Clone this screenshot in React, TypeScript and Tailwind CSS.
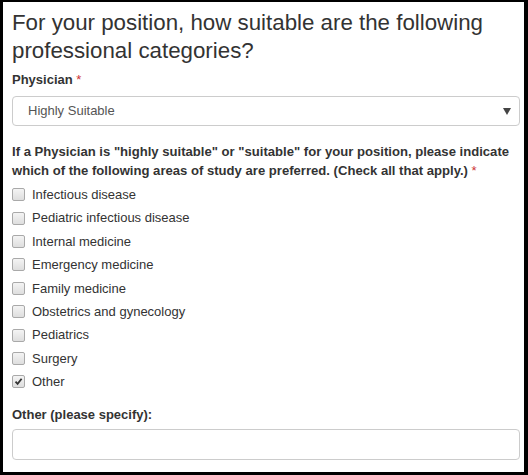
import { useState } from "react";

const areas = [
  "Infectious disease",
  "Pediatric infectious disease",
  "Internal medicine",
  "Emergency medicine",
  "Family medicine",
  "Obstetrics and gynecology",
  "Pediatrics",
  "Surgery",
  "Other",
];

function Box({ checked, onToggle }: { checked: boolean; onToggle: () => void }) {
  return (
    <span
      onClick={onToggle}
      className="flex h-[13px] w-[13px] shrink-0 items-center justify-center rounded-[2px] border border-[#a9a9a9] bg-gradient-to-b from-[#f4f4f4] to-[#dedede]"
    >
      {checked && (
        <svg width="9" height="9" viewBox="0 0 9 9">
          <path d="M1.5 4.6 L3.6 6.8 L7.6 1.8" fill="none" stroke="#333" strokeWidth="1.8" />
        </svg>
      )}
    </span>
  );
}

export default function App() {
  const [picked, setPicked] = useState<string[]>(["Other"]);

  const toggle = (name: string) =>
    setPicked((p) => (p.includes(name) ? p.filter((x) => x !== name) : [...p, name]));

  return (
    <div className="h-[475px] w-[528px] bg-black pt-[2px] pr-[4px] pb-[3px] pl-[3px] font-['Liberation_Sans',Arial,sans-serif]">
      <div className="h-full bg-white pt-[7px] pr-[4px] pl-[9px] text-[#333]">
        <h2 className="text-[22.3px] leading-[28px] text-[#333]">
          For your position, how suitable are the following professional categories?
        </h2>

        <label className="mt-[6px] block text-[13px] font-bold leading-[18px]">
          Physician <span className="font-normal text-[#c33]">*</span>
        </label>
        <div className="mt-[7px] flex h-[30px] items-center justify-between rounded-[4px] border border-[#ccc] pr-[8px] pl-[15px] text-[13px] text-[#555]">
          <span>Highly Suitable</span>
          <svg width="8" height="7" viewBox="0 0 8 7">
            <path d="M0 0 H8 L4 7 Z" fill="#444" />
          </svg>
        </div>

        <p className="mt-[16px] pr-[2px] text-[13.1px] font-bold leading-[19px]">
          If a Physician is "highly suitable" or "suitable" for your position, please indicate
          which of the following areas of study are preferred. (Check all that apply.){" "}
          <span className="font-normal text-[#c33]">*</span>
        </p>

        <ul className="mt-[3px]">
          {areas.map((a) => (
            <li key={a} className="flex h-[23.4px] items-center gap-[7px] text-[13px]">
              <Box checked={picked.includes(a)} onToggle={() => toggle(a)} />
              <span>{a}</span>
            </li>
          ))}
        </ul>

        <label className="mt-[12px] block text-[13px] font-bold leading-[18px]">
          Other (please specify):
        </label>
        <input
          type="text"
          className="mt-[5px] block h-[31px] w-full rounded-[4px] border border-[#ccc] px-3 text-[13px] outline-none"
        />
      </div>
    </div>
  );
}
